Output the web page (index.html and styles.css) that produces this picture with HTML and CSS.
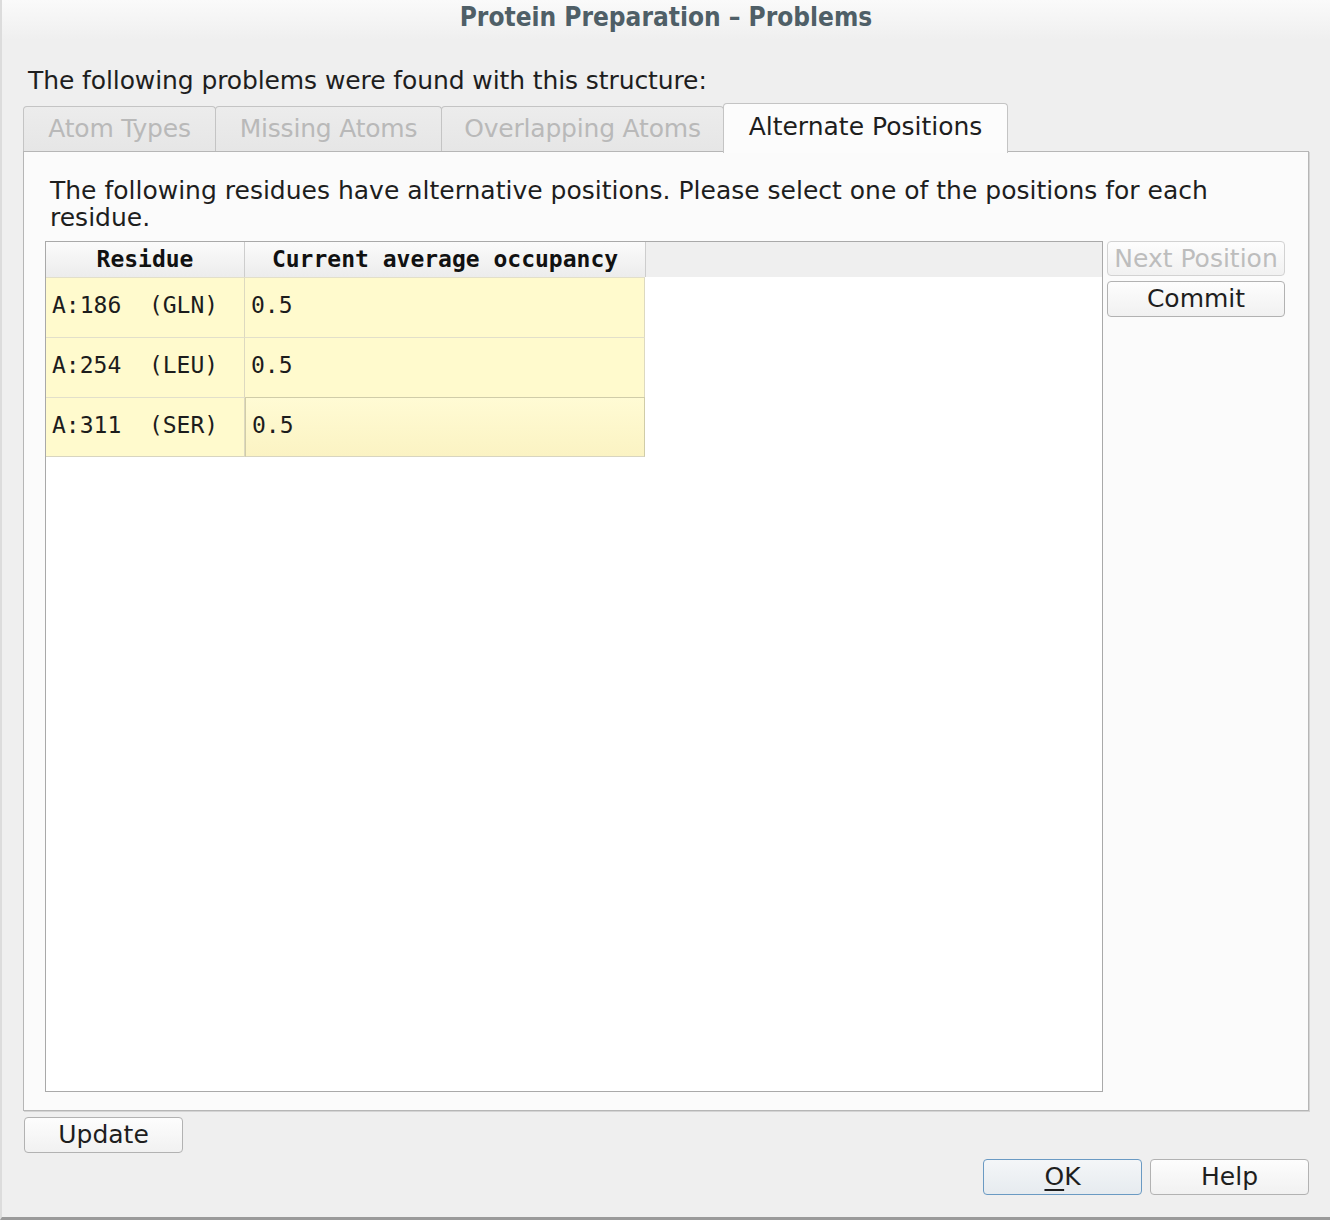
FILE: index.html
```html
<!DOCTYPE html>
<html>
<head>
<meta charset="utf-8">
<link rel="stylesheet" href="styles.css">
</head>
<body>
<div class="window">
  <div class="titlebar"><span class="title">Protein Preparation – Problems</span></div>
  <div class="content">
    <div class="intro">The following problems were found with this structure:</div>
    <div class="tabs">
      <div class="tab t1">Atom Types</div>
      <div class="tab t2">Missing Atoms</div>
      <div class="tab t3">Overlapping Atoms</div>
      <div class="tab active">Alternate Positions</div>
    </div>
    <div class="panel">
      <div class="desc">The following residues have alternative positions. Please select one of the positions for each residue.</div>
      <div class="panel-body">
        <div class="table">
          <div class="thead">
            <div class="th c1">Residue</div>
            <div class="th c2">Current average occupancy</div>
          </div>
          <div class="row">
            <div class="td c1">A:186  (GLN)</div>
            <div class="td c2">0.5</div>
          </div>
          <div class="row">
            <div class="td c1">A:254  (LEU)</div>
            <div class="td c2">0.5</div>
          </div>
          <div class="row">
            <div class="td c1">A:311  (SER)</div>
            <div class="td c2 current">0.5</div>
          </div>
        </div>
        <div class="side">
          <div class="btn disabled">Next Position</div>
          <div class="btn">Commit</div>
        </div>
      </div>
    </div>
    <div class="update-row"><div class="btn wide">Update</div></div>
    <div class="footer">
      <div class="btn wide default"><span class="u">O</span>K</div>
      <div class="btn wide">Help</div>
    </div>
  </div>
</div>
</body>
</html>
```
FILE: styles.css
```css
html, body {
  margin: 0;
  padding: 0;
}
body {
  width: 1330px;
  height: 1220px;
  background: #efefef;
  font-family: "DejaVu Sans", "Liberation Sans", sans-serif;
  font-size: 25px;
  color: #1e1e1e;
  overflow: hidden;
}
.window {
  width: 1330px;
  height: 1220px;
  box-sizing: border-box;
  border-left: 2px solid #dcdcdc;
  border-bottom: 3px solid #9a9a9a;
  display: flex;
  flex-direction: column;
}
.titlebar {
  height: 40px;
  flex: none;
  background: linear-gradient(#fafafa, #efefef);
  display: flex;
  justify-content: center;
  align-items: center;
}
.title {
  font-family: "DejaVu Sans Condensed", "DejaVu Sans", sans-serif;
  font-stretch: condensed;
  font-weight: bold;
  font-size: 26px;
  color: #4f5f67;
  margin-top: -6px;
}
.content {
  padding: 0 21px 0 21px;
  display: flex;
  flex-direction: column;
}
.intro {
  height: 28px;
  line-height: 28px;
  margin-top: 27px;
  padding-left: 5px;
  white-space: nowrap;
  letter-spacing: -0.1px;
}
.tabs {
  display: flex;
  margin-top: 8px;
  height: 48px;
  align-items: flex-end;
  position: relative;
  z-index: 1;
}
.tab {
  box-sizing: border-box;
  height: 45px;
  border: 1px solid #c4c4c4;
  border-bottom: none;
  border-radius: 4px 4px 0 0;
  background: linear-gradient(#ececec, #e6e6e6);
  color: #b9b9b9;
  text-align: center;
  line-height: 44px;
  white-space: nowrap;
  margin-right: -1px;
  letter-spacing: -0.2px;
}
.t1 { width: 193px; }
.t2 { width: 227px; }
.t3 { width: 283px; }
.tab.active {
  width: 285px;
  height: 50px;
  margin-bottom: -2px;
  background: #fcfcfc;
  color: #1e1e1e;
  line-height: 46px;
  letter-spacing: 0;
}
.panel {
  box-sizing: border-box;
  height: 960px;
  border: 1px solid #b6b6b6;
  box-shadow: 1px 1px 0 #d4d4d4;
  background: #fbfbfb;
  padding: 25px 21px 18px 21px;
  display: flex;
  flex-direction: column;
}
.desc {
  line-height: 27px;
  padding: 0 20px 0 5px;
  margin-bottom: 10px;
}
.panel-body {
  flex: 1;
  display: flex;
  gap: 4px;
}
.table {
  box-sizing: border-box;
  width: 1058px;
  border: 1px solid #a9a9a9;
  background: #ffffff;
  font-family: "DejaVu Sans Mono", "Liberation Mono", monospace;
  font-size: 23px;
}
.thead {
  display: flex;
  height: 35px;
  background: #efefef;
}
.th {
  box-sizing: border-box;
  height: 35px;
  line-height: 35px;
  font-weight: bold;
  text-align: center;
  color: #111;
  background: linear-gradient(#fbfbfb, #ececec);
  border-right: 1px solid #cdcdcd;
  white-space: pre;
}
.c1 { width: 199px; }
.c2 { width: 400px; }
.th.c2 { width: 401px; }
.row {
  display: flex;
  height: 60px;
}
.td {
  box-sizing: border-box;
  height: 60px;
  line-height: 55px;
  padding-left: 6px;
  background: #fffacd;
  border-right: 1px solid #ddd9c0;
  border-top: 1px solid #e2dfca;
  color: #1c1c1c;
  white-space: pre;
}
.row:last-child .td {
  border-bottom: 1px solid #d8d5c0;
}
.td.current {
  border: 1px solid #d0cca8;
  background: linear-gradient(#fffbd4, #fbf3c3);
}
.side {
  width: 178px;
  display: flex;
  flex-direction: column;
  gap: 5px;
}
.btn {
  box-sizing: border-box;
  height: 36px;
  line-height: 34px;
  text-align: center;
  border: 1px solid #b2b2b2;
  border-radius: 4px;
  background: linear-gradient(#fdfdfd, #f1f1f1);
  color: #1e1e1e;
  white-space: nowrap;
}
.btn.disabled {
  color: #bdbdbd;
  border-color: #d2d2d2;
  height: 35px;
}
.btn.wide {
  width: 159px;
}
.update-row {
  margin-top: 6px;
  padding-left: 1px;
}
.footer {
  display: flex;
  justify-content: flex-end;
  gap: 8px;
  margin-top: 6px;
}
.btn.default {
  border-color: #6a9ac3;
  background: linear-gradient(#f4f6f8, #e6ebef);
}
.u {
  text-decoration: underline;
  text-underline-offset: 4px;
}
```
